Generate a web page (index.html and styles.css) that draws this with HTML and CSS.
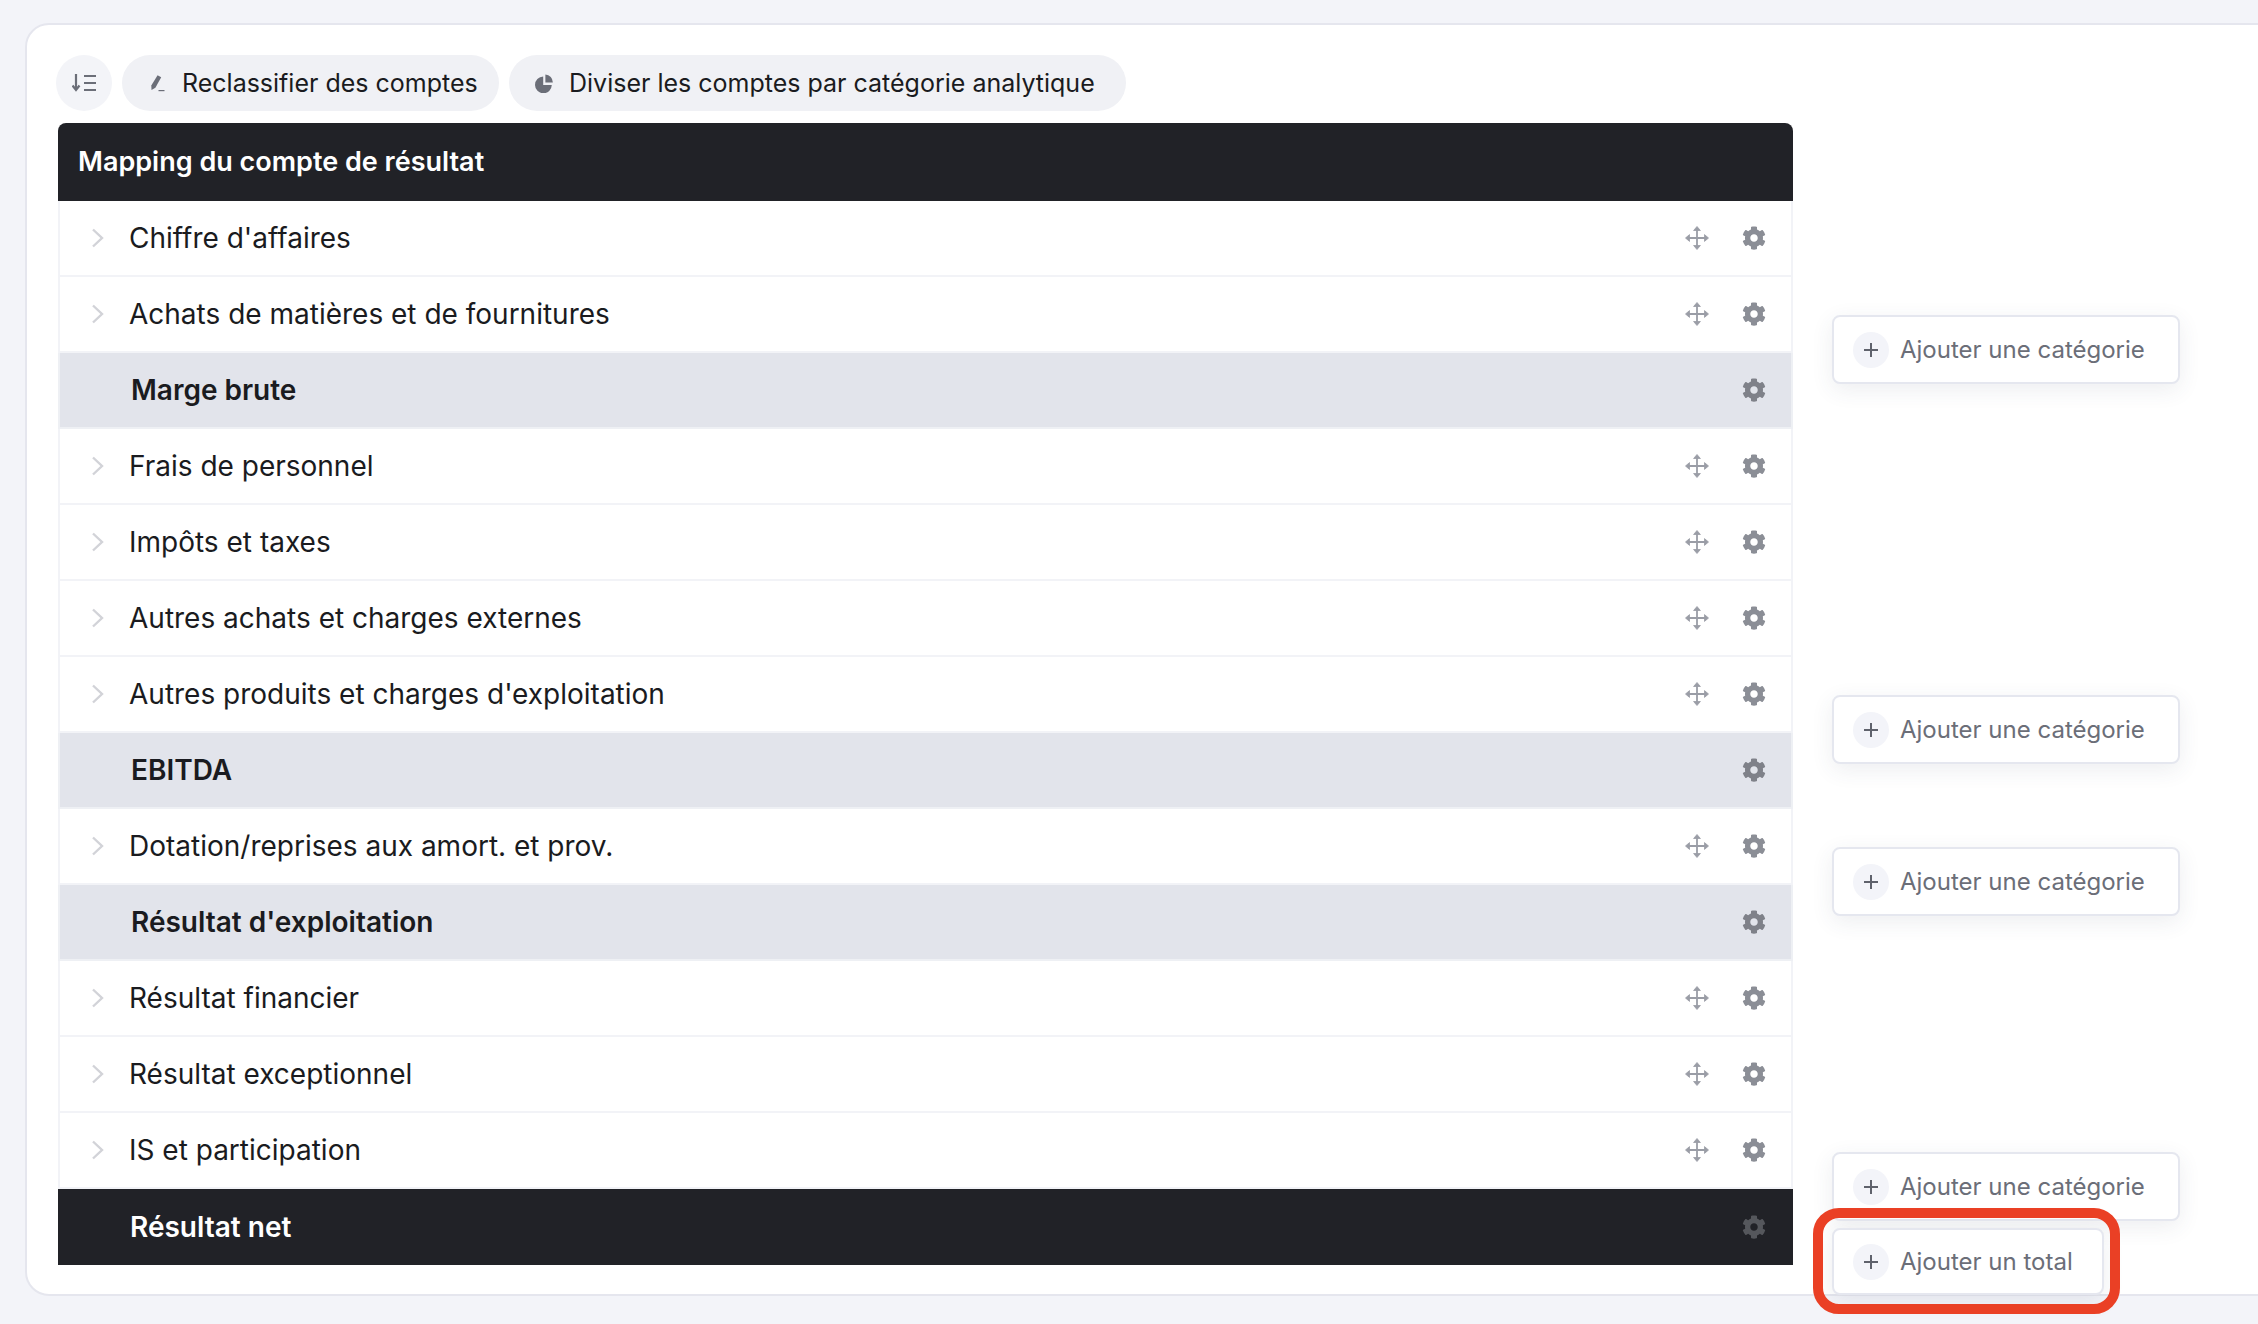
FILE: index.html
```html
<!DOCTYPE html>
<html lang="fr">
<head>
<meta charset="utf-8">
<title>Mapping du compte de résultat</title>
<link rel="stylesheet" href="styles.css">
</head>
<body>
<svg class="defs" width="0" height="0" aria-hidden="true">
  <symbol id="gear" viewBox="0 0 512 512"><path fill-rule="evenodd" d="M487.4 315.7l-42.6-24.6c4.3-23.2 4.3-47 0-70.2l42.6-24.6c4.9-2.8 7.1-8.6 5.5-14-11.1-35.6-30-67.8-54.7-94.6-3.8-4.1-10-5.1-14.8-2.3L380.8 110c-17.9-15.4-38.5-27.3-60.8-35.1V25.8c0-5.6-3.9-10.5-9.4-11.7-36.7-8.2-74.3-7.8-109.2 0-5.5 1.2-9.4 6.1-9.4 11.7V75c-22.2 7.9-42.8 19.8-60.8 35.1L88.7 85.5c-4.9-2.8-11-1.9-14.8 2.3-24.7 26.7-43.6 58.9-54.7 94.6-1.7 5.4.6 11.2 5.5 14L67.3 221c-4.3 23.2-4.3 47 0 70.2l-42.6 24.6c-4.9 2.8-7.1 8.6-5.5 14 11.1 35.6 30 67.8 54.7 94.6 3.8 4.1 10 5.1 14.8 2.3l42.6-24.6c17.9 15.4 38.5 27.3 60.8 35.1v49.2c0 5.6 3.9 10.5 9.4 11.7 36.7 8.2 74.3 7.8 109.2 0 5.5-1.2 9.4-6.1 9.4-11.7v-49.2c22.2-7.9 42.8-19.8 60.8-35.1l42.6 24.6c4.9 2.8 11 1.9 14.8-2.3 24.7-26.7 43.6-58.9 54.7-94.6 1.5-5.5-.7-11.3-5.6-14.1zM256 336c-44.1 0-80-35.9-80-80s35.9-80 80-80 80 35.9 80 80-35.9 80-80 80z"/></symbol>
  <symbol id="move" viewBox="0 0 24 24"><path d="M12 3v18M3 12h18" fill="none" stroke="currentColor" stroke-width="1.8"/><path d="M12 0.5l3.4 4h-6.8zM12 23.5l3.4-4h-6.8zM0.5 12l4-3.4v6.8zM23.5 12l-4-3.4v6.8z" stroke="currentColor" stroke-width="0.8" stroke-linejoin="round"/></symbol>
  <symbol id="chev" viewBox="0 0 13 20"><path d="M2 1.5l9 8.5-9 8.5" fill="none" stroke="currentColor" stroke-width="2.4"/></symbol>
  <symbol id="plus" viewBox="0 0 16 16"><path d="M8 1v14M1 8h14" fill="none" stroke="currentColor" stroke-width="2"/></symbol>
</svg>

<main class="card">
  <div class="toolbar">
    <button class="tool tool-round" type="button">
      <svg class="ico-sort" viewBox="0 0 24 18"><path d="M4 0v15M0.5 11.5L4 16l3.5-4.5" fill="none" stroke="currentColor" stroke-width="2.2"/><path d="M12 2h12M12 9h12M12 16h12" fill="none" stroke="currentColor" stroke-width="2.2"/></svg>
    </button>
    <button class="tool tool-first" type="button">
      <svg class="ico-pen" viewBox="0 0 16 18"><path d="M8.6 1.2l3.6 2-5.8 10.6-3.9 2.2-.2-4.4z"/><path d="M9.5 16.6h6" fill="none" stroke="currentColor" stroke-width="1.2"/></svg>
      <span>Reclassifier des comptes</span>
    </button>
    <button class="tool tool-second" type="button">
      <svg class="ico-pie" viewBox="0 0 18 19"><path d="M8.2 2.5v8.6h8.6A8.4 8.4 0 1 1 8.2 2.5z"/><path d="M10.4 0.6a7.8 7.8 0 0 1 7.4 8H10.4z"/></svg>
      <span>Diviser les comptes par catégorie analytique</span>
    </button>
  </div>

  <div class="workspace">
    <section class="table">
      <h1 class="table-head">Mapping du compte de résultat</h1>

      <div class="row"><svg class="chev"><use href="#chev"/></svg><span class="label">Chiffre d'affaires</span><svg class="move"><use href="#move"/></svg><svg class="gear"><use href="#gear"/></svg></div>
      <div class="row"><svg class="chev"><use href="#chev"/></svg><span class="label">Achats de matières et de fournitures</span><svg class="move"><use href="#move"/></svg><svg class="gear"><use href="#gear"/></svg></div>
      <div class="row row-total"><span class="label">Marge brute</span><svg class="gear"><use href="#gear"/></svg></div>
      <div class="row"><svg class="chev"><use href="#chev"/></svg><span class="label">Frais de personnel</span><svg class="move"><use href="#move"/></svg><svg class="gear"><use href="#gear"/></svg></div>
      <div class="row"><svg class="chev"><use href="#chev"/></svg><span class="label">Impôts et taxes</span><svg class="move"><use href="#move"/></svg><svg class="gear"><use href="#gear"/></svg></div>
      <div class="row"><svg class="chev"><use href="#chev"/></svg><span class="label">Autres achats et charges externes</span><svg class="move"><use href="#move"/></svg><svg class="gear"><use href="#gear"/></svg></div>
      <div class="row"><svg class="chev"><use href="#chev"/></svg><span class="label">Autres produits et charges d'exploitation</span><svg class="move"><use href="#move"/></svg><svg class="gear"><use href="#gear"/></svg></div>
      <div class="row row-total"><span class="label">EBITDA</span><svg class="gear"><use href="#gear"/></svg></div>
      <div class="row"><svg class="chev"><use href="#chev"/></svg><span class="label">Dotation/reprises aux amort. et prov.</span><svg class="move"><use href="#move"/></svg><svg class="gear"><use href="#gear"/></svg></div>
      <div class="row row-total"><span class="label">Résultat d'exploitation</span><svg class="gear"><use href="#gear"/></svg></div>
      <div class="row"><svg class="chev"><use href="#chev"/></svg><span class="label">Résultat financier</span><svg class="move"><use href="#move"/></svg><svg class="gear"><use href="#gear"/></svg></div>
      <div class="row"><svg class="chev"><use href="#chev"/></svg><span class="label">Résultat exceptionnel</span><svg class="move"><use href="#move"/></svg><svg class="gear"><use href="#gear"/></svg></div>
      <div class="row"><svg class="chev"><use href="#chev"/></svg><span class="label">IS et participation</span><svg class="move"><use href="#move"/></svg><svg class="gear"><use href="#gear"/></svg></div>
      <div class="row row-net"><span class="label">Résultat net</span><svg class="gear"><use href="#gear"/></svg></div>
    </section>

    <aside class="side">
      <button class="add add-1" type="button"><span class="add-ico"><svg><use href="#plus"/></svg></span>Ajouter une catégorie</button>
      <button class="add add-2" type="button"><span class="add-ico"><svg><use href="#plus"/></svg></span>Ajouter une catégorie</button>
      <button class="add add-3" type="button"><span class="add-ico"><svg><use href="#plus"/></svg></span>Ajouter une catégorie</button>
      <button class="add add-4" type="button"><span class="add-ico"><svg><use href="#plus"/></svg></span>Ajouter une catégorie</button>
      <button class="add add-5" type="button"><span class="add-ico"><svg><use href="#plus"/></svg></span>Ajouter un total<span class="highlight"></span></button>
    </aside>
  </div>
</main>
</body>
</html>
```

FILE: styles.css
```css
* { box-sizing: border-box; }
html, body { margin: 0; height: 1324px; overflow: hidden; }
body {
  background: #f3f4f9;
  font-family: Inter, "Liberation Sans", sans-serif;
  color: #1a1b20;
  padding: 23px 0 0 25px;
}
.defs { position: absolute; }

.card {
  width: 2280px;
  height: 1273px;
  background: #fff;
  border: 2px solid #e5e6ee;
  border-radius: 24px;
  padding: 30px 0 0 29px;
}

.toolbar { display: flex; gap: 10px; height: 56px; }
.tool {
  display: flex;
  align-items: center;
  height: 56px;
  border: 0;
  border-radius: 28px;
  background: #f0f1f5;
  color: #1a1b20;
  font: 400 25px Inter, "Liberation Sans", sans-serif;
  padding: 0;
}
.tool-round { width: 56px; justify-content: center; background: #f3f4f8; color: #6b6e78; }
.tool-first { width: 377px; padding-left: 27px; gap: 17px; }
.tool-second { width: 617px; padding-left: 26px; gap: 16px; }
.ico-sort { width: 24px; height: 18px; }
.ico-pen { width: 16px; height: 18px; fill: #6b6e78; color: #6b6e78; }
.ico-pie { width: 18px; height: 19px; fill: #6b6e78; }

.workspace { display: flex; margin: 12px 0 0 2px; }

.table {
  width: 1735px;
  flex: none;
  border-radius: 8px;
  overflow: hidden;
}
.table-head {
  margin: 0;
  height: 78px;
  background: #212227;
  color: #fff;
  font-size: 27px;
  font-weight: 600;
  line-height: 78px;
  padding-left: 20px;
}
.row {
  display: flex;
  align-items: center;
  height: 76px;
  padding: 0 25px 0 33px;
  background: #fff;
  border: solid #f2f3f7;
  border-width: 0 2px 2px 2px;
  font-size: 28px;
}
.chev { width: 13px; height: 20px; color: #d2d3d8; flex: none; margin-left: -2px; }
.label { margin-left: 25px; flex: 1; }
.move { width: 24px; height: 24px; color: #9a9da6; fill: #9a9da6; flex: none; }
.gear { width: 24px; height: 24px; fill: #8b8e96; flex: none; margin-left: 33px; }

.row-total { background: #e2e4eb; border-color: #eef0f4; font-weight: 600; padding-left: 46px; }
.row-total .label, .row-net .label { margin-left: 25px; }
.row-total .gear { fill: #7f8189; }
.row-net {
  background: #212227;
  border: 0;
  height: 76px;
  color: #fff;
  font-weight: 600;
  padding-left: 47px;
}
.row-net .gear { fill: #55575c; margin-right: 2px; }

.side { display: flex; flex-direction: column; align-items: flex-start; padding-left: 39px; }
.add {
  position: relative;
  display: flex;
  align-items: center;
  height: 69px;
  padding: 0 0 0 19px;
  gap: 11px;
  background: #fff;
  border: 2px solid #e5e7ef;
  border-radius: 8px;
  box-shadow: 0 6px 22px rgba(60, 65, 90, 0.09);
  color: #6b6e78;
  font: 400 24px Inter, "Liberation Sans", sans-serif;
  flex: none;
}
.add-1, .add-2, .add-3, .add-4 { width: 348px; }
.add-1 { margin-top: 192px; }
.add-2 { margin-top: 311px; }
.add-3 { margin-top: 83px; }
.add-4 { margin-top: 236px; }
.add-5 { margin-top: 7px; width: 272px; height: 67px; }
.add-ico {
  width: 36px;
  height: 36px;
  border-radius: 50%;
  background: #f3f4f9;
  color: #5f626c;
  display: flex;
  align-items: center;
  justify-content: center;
  flex: none;
}
.add-ico svg { width: 16px; height: 16px; }
.highlight {
  position: absolute;
  left: -21px;
  top: -22px;
  width: 307px;
  height: 106px;
  border: 10px solid #ea4025;
  border-radius: 26px;
  pointer-events: none;
}
```
